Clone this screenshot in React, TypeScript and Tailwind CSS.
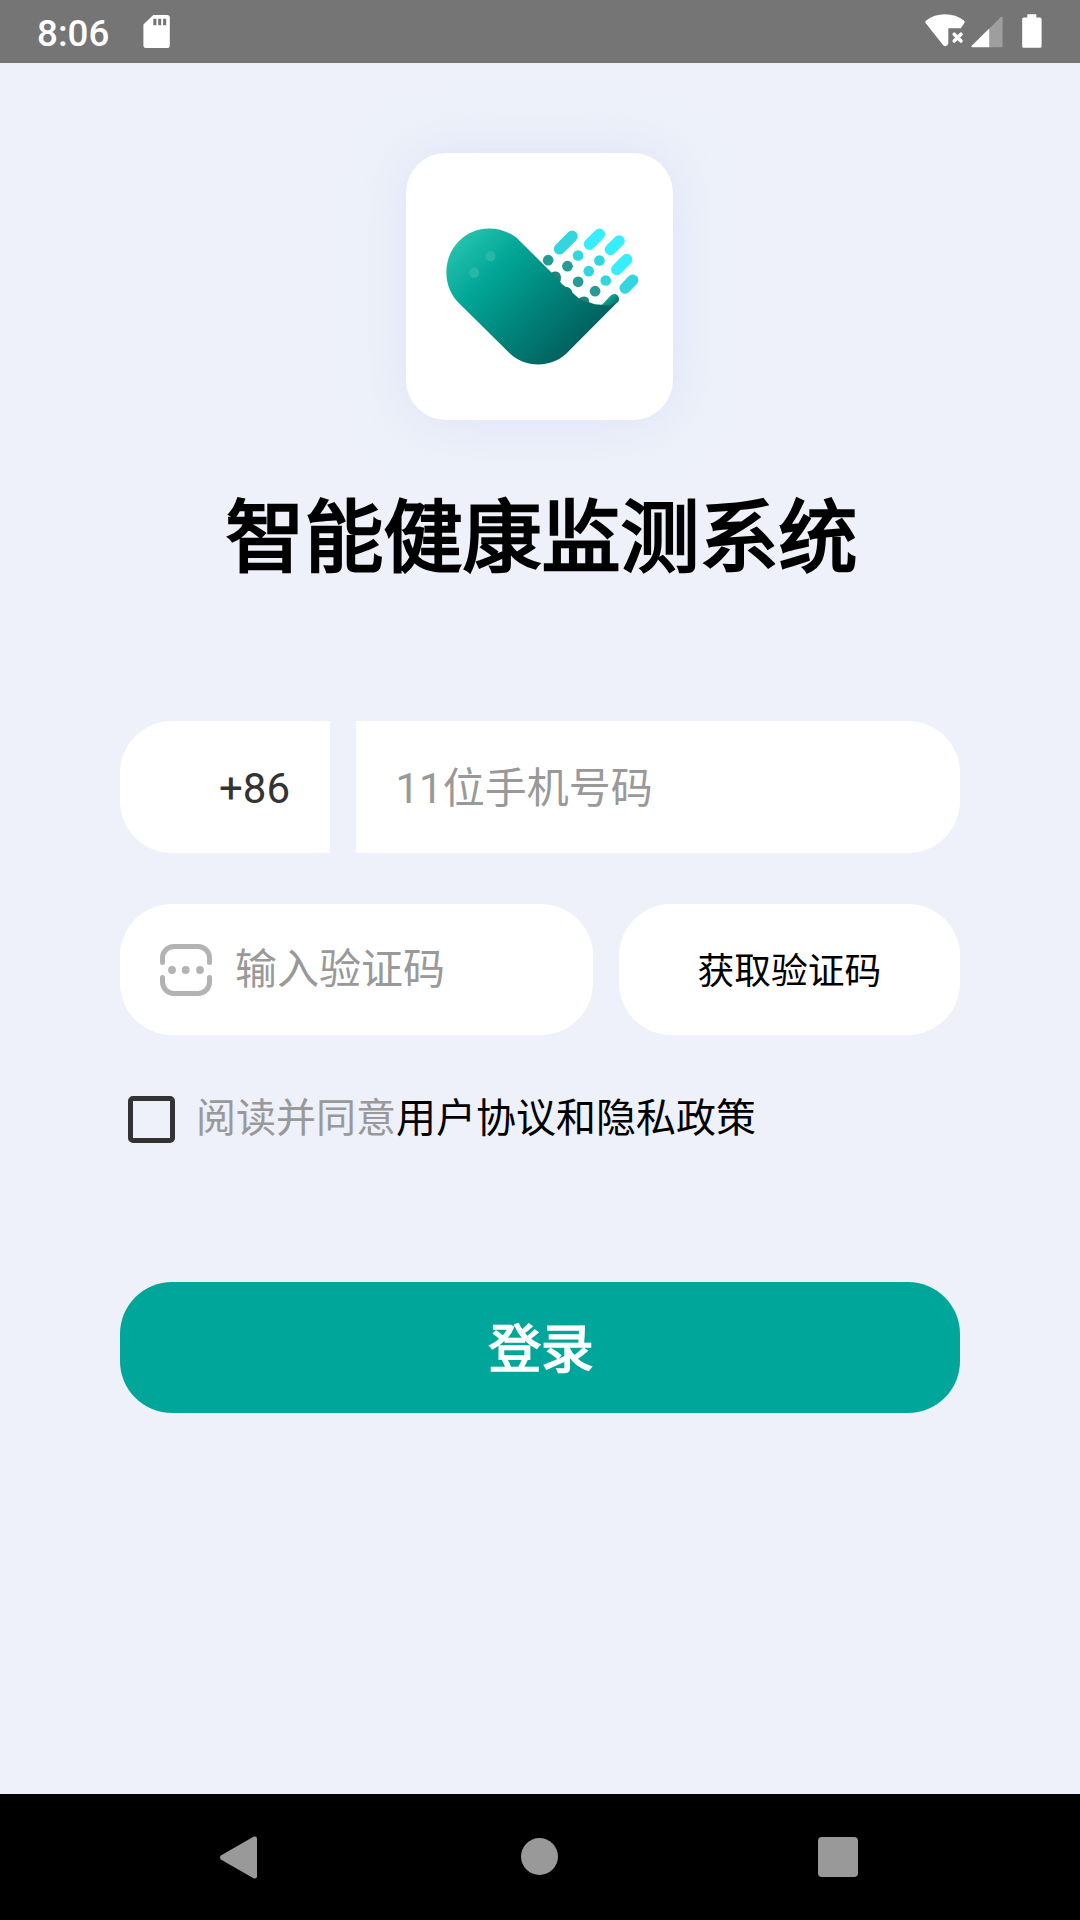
import * as React from "react";

const SdCardIcon = () => (
  <svg viewBox="0 0 27 34" className="h-[34px] w-[27px]" aria-hidden="true">
    <path
      fill="#fff"
      fillRule="evenodd"
      d="M10.3 0H24a2.8 2.8 0 0 1 2.8 2.8v27.4A2.8 2.8 0 0 1 24 33H3.2A2.8 2.8 0 0 1 .4 30.200V9.600zM10.300 3.700V10.300H13.400V3.700zM15.200 3.700V10.300H18.200V3.700zM20.100 3.700V10.300H23.200V3.700z"
    />
  </svg>
);

const WifiOffIcon = () => (
  <svg viewBox="0 0 40 33" className="h-[33px] w-10" aria-hidden="true">
    <path
      fill="#fff"
      d="M.8 9.200Q-.4 7.700 1.200 6.400Q9 .2 20 .2T38.800 6.400Q40.400 7.700 39.200 9.200L35.800 14.200H23.300V29.500Q23 31.800 20.300 32.200Q19 32.200 18 31z"
    />
    <path d="M29.200 20.200l6.800 6.800M36 20.200l-6.800 6.800" stroke="#fff" strokeWidth="3.500" strokeLinecap="round" />
  </svg>
);

const SignalIcon = () => (
  <svg viewBox="0 0 32 32" className="h-8 w-8" aria-hidden="true">
    <path fill="#9e9e9e" d="M18 13L30 .8Q31.600 .2 31.600 2V30Q31.600 31.300 30.300 31.300H18z" />
    <path fill="#fff" d="M18.200 12.400V31.300H1.500Q-.3 31 .7 29.700z" />
  </svg>
);

const BatteryIcon = () => (
  <svg viewBox="0 0 20 34" className="h-[34px] w-5" aria-hidden="true">
    <path
      fill="#fff"
      d="M5.300 .2H14.300V3.500H18Q19.600 3.500 19.600 5V32.200Q19.600 33.800 18 33.800H1.800Q.2 33.800 .2 32.200V5Q.2 3.500 1.800 3.500H5.300z"
    />
  </svg>
);

const CodeIcon = () => (
  <svg viewBox="0 0 52 52" className="h-[52px] w-[52px] shrink-0" fill="none" aria-hidden="true">
    <path
      d="M2.500 18.500V14A11.500 11.500 0 0 1 14 2.500H38A11.500 11.500 0 0 1 49.500 14V18.500M2.500 33.500V38A11.500 11.500 0 0 0 14 49.500H38A11.500 11.500 0 0 0 49.500 38V33.500"
      stroke="#b3b3b3"
      strokeWidth="5"
      strokeLinecap="round"
    />
    <g fill="#b3b3b3">
      <circle cx="12" cy="26" r="3.900" />
      <circle cx="25.700" cy="26" r="3.900" />
      <circle cx="40" cy="26" r="3.900" />
    </g>
  </svg>
);

// Heart made of a solid capsule that dissolves into dots and dashes on the right.
const HeartLogo = () => (
  <svg viewBox="0 0 802 802" className="h-full w-full" fill="none" aria-hidden="true">
    <defs>
      <linearGradient id="body" x1="205" y1="205" x2="535" y2="535" gradientUnits="userSpaceOnUse">
        <stop offset="0" stopColor="#26c2ae" />
        <stop offset="0.330" stopColor="#00a596" />
        <stop offset="1" stopColor="#006460" />
      </linearGradient>
      <linearGradient id="curl" x1="600" y1="430" x2="632" y2="462" gradientUnits="userSpaceOnUse">
        <stop offset="0" stopColor="#15b5a2" />
        <stop offset="1" stopColor="#00675f" />
      </linearGradient>
    </defs>
    <path
      fill="url(#body)"
      d="M342 264L437 359Q447 363 449 366Q466 369 463 387Q468 396 479 402Q496 404 500 420Q511 430 520 437Q544 426 550 448Q566 456 586 456Q618 455 640 440Q638 445 632 451L490 594C442 648 357 648 309 599L161 453C109 403 108 317 158 266C207 214 292 214 342 264Z"
    />
    <path fill="url(#curl)" d="M587 457L612 431Q624 419 635 427Q645 438 635 449Q617 459 587 457Z" />
    <g fill="#28b6a7">
      <circle cx="253" cy="310" r="15.500" />
      <circle cx="204" cy="359" r="15.500" />
    </g>
    <path fill="#26817b" d="M436 360Q448 352 460 360Q469 370 463 387ZM520 437Q533 426 546 435Q552 441 550 450Q535 446 520 437Z" />
    <g fill="#269b95">
      <circle cx="427" cy="322" r="16" />
      <circle cx="485" cy="340" r="16" />
      <circle cx="517" cy="387" r="16" />
      <circle cx="568" cy="415" r="16" />
    </g>
    <g fill="#33d6df">
      <circle cx="517" cy="308" r="16" />
      <circle cx="581" cy="323" r="16" />
      <circle cx="549" cy="355" r="16" />
      <circle cx="600" cy="383" r="16" />
    </g>
    <g strokeWidth="34" strokeLinecap="round">
      <path stroke="#33d6df" d="M461 288L499 250M658 406L681 382" />
      <path stroke="#36eeff" d="M551 274L581 244M614 290L640 264M633 350L663 320" />
    </g>
  </svg>
);

const StatusBar = () => (
  <header className="flex h-[63px] items-start bg-[#757575] pl-[37px] pr-[38px] text-white">
    <span className="w-[106px] pt-3 font-[Roboto,sans-serif] text-[36.75px] font-medium leading-[44px]">8:06</span>
    <span className="pt-[15px]">
      <SdCardIcon />
    </span>
    <div className="ml-auto flex items-start pt-3.5">
      <WifiOffIcon />
      <span className="ml-1.5 pt-0.5">
        <SignalIcon />
      </span>
      <span className="ml-[19px]">
        <BatteryIcon />
      </span>
    </div>
  </header>
);

const NavBar = () => (
  <nav className="flex h-[126px] items-center justify-between bg-black pl-[220px] pr-[222px]">
    <svg viewBox="0 0 37 43" className="h-[43px] w-[37px]" aria-label="Back">
      <path fill="#999" d="M.8 19.500L33.500 .7Q37 -.3 37 2.800V40.200Q37 43.300 33.500 42.300L.8 23.500Q-.8 21.500 .8 19.500z" />
    </svg>
    <span className="mb-px ml-[3px] size-[37px] rounded-full bg-[#999]" />
    <span className="size-10 rounded-[4px] bg-[#999]" />
  </nav>
);

export default function App() {
  const [phone, setPhone] = React.useState("");
  const [code, setCode] = React.useState("");
  const [agreed, setAgreed] = React.useState(false);

  return (
    <div
      lang="zh-CN"
      className="flex h-[1920px] w-[1080px] flex-col overflow-hidden bg-[#eef1f9] font-[Roboto,'Noto_Sans_CJK_SC',sans-serif] text-black"
    >
      <StatusBar />

      <main className="flex flex-1 flex-col items-center px-[120px] pt-[90px]">
        <div className="mr-px size-[267px] shrink-0 rounded-[40px] bg-white shadow-[0_0_50px_rgba(210,216,248,0.6)]">
          <HeartLogo />
        </div>

        {/* Emboldened regular weight, the way the platform synthesises bold CJK */}
        <h1 className="mt-[61px] pl-[3px] text-[79px] font-normal leading-[116px] [-webkit-text-stroke:2.6px_currentColor]">
          智能健康监测系统
        </h1>

        <form className="mt-[124px] w-full" onSubmit={(e) => e.preventDefault()}>
          <div className="flex h-[132px] gap-[26px] text-[42px]">
            <div className="flex w-[210px] items-center justify-end rounded-l-[52px] bg-white pr-10 pt-0.5 text-[#333]">+86</div>
            <input
              type="tel"
              maxLength={11}
              value={phone}
              onChange={(e) => setPhone(e.target.value)}
              placeholder="11位手机号码"
              className="min-w-0 flex-1 rounded-r-[52px] bg-white pl-[39.5px] pr-10 pt-0.5 outline-none placeholder:text-[#999]"
            />
          </div>

          <div className="mt-[51px] flex h-[131px] gap-[26px]">
            <label className="flex w-[473px] items-center gap-[23px] rounded-[52px] bg-white px-10">
              <CodeIcon />
              <input
                value={code}
                onChange={(e) => setCode(e.target.value)}
                placeholder="输入验证码"
                className="w-full min-w-0 text-[42px] outline-none placeholder:text-[#999]"
              />
            </label>
            <button type="button" className="flex-1 rounded-[52px] bg-white pt-1 text-[36.75px]">
              获取验证码
            </button>
          </div>

          <label className="mt-[54px] flex h-[60px] items-center pl-2 text-[40px] leading-[60px]">
            <input
              type="checkbox"
              checked={agreed}
              onChange={(e) => setAgreed(e.target.checked)}
              className="size-[47px] appearance-none rounded-[5px] border-5 border-[#333] checked:bg-[#333]"
            />
            <span className="ml-[21px] text-[#999]">阅读并同意</span>
            <span>用户协议和隐私政策</span>
          </label>

          <button
            type="submit"
            className="mt-[133px] h-[131px] w-full rounded-[52px] bg-[#00a69a] pl-0.5 pt-[5px] text-[52.5px] font-normal text-white [-webkit-text-stroke:1.7px_currentColor]"
          >
            登录
          </button>
        </form>
      </main>

      <NavBar />
    </div>
  );
}
